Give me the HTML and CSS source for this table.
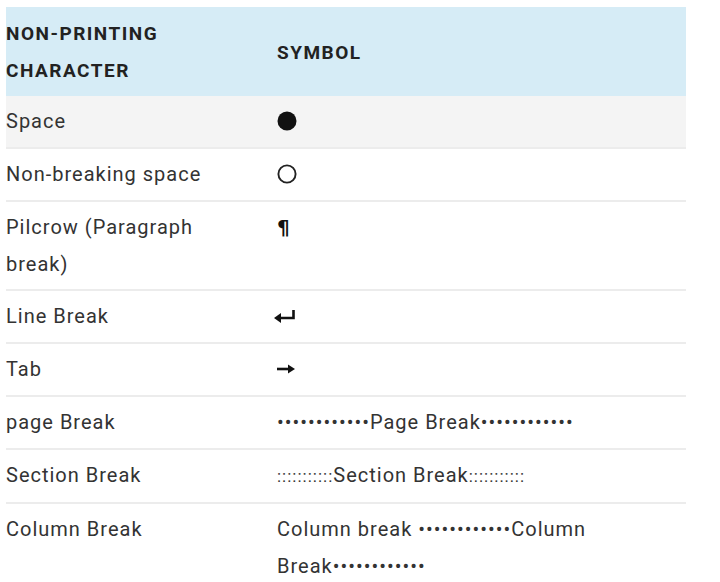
FILE: index.html
```html
<!DOCTYPE html>
<html>
<head>
<meta charset="utf-8">
<link rel="stylesheet" href="styles.css">
</head>
<body>
<div class="page">
  <table class="chars">
    <thead>
      <tr><th class="c1">NON-PRINTING CHARACTER</th><th>SYMBOL</th></tr>
    </thead>
    <tbody>
      <tr class="shade"><td class="c1">Space</td><td><svg class="ico" width="20" height="20" viewBox="0 0 20 20"><circle cx="10" cy="10" r="9.5" fill="#111"/></svg></td></tr>
      <tr><td class="c1">Non-breaking space</td><td><svg class="ico" width="20" height="20" viewBox="0 0 20 20"><circle cx="10" cy="10" r="8.6" fill="none" stroke="#222" stroke-width="1.9"/></svg></td></tr>
      <tr class="tight"><td class="c1">Pilcrow (Paragraph break)</td><td><span class="pilcrow">¶</span></td></tr>
      <tr><td class="c1">Line Break</td><td><svg class="ico lb" width="24" height="14" viewBox="0 0 24 14"><path d="M20.5 1 V9 H6" fill="none" stroke="#111" stroke-width="2.6"/><path d="M1 9 L8 4 L8 14 Z" fill="#111"/></svg></td></tr>
      <tr><td class="c1">Tab</td><td><svg class="ico" width="18" height="10" viewBox="0 0 18 10"><path d="M0 5 H12" stroke="#111" stroke-width="2.6"/><path d="M18 5 L11 0.5 L11 9.5 Z" fill="#111"/></svg></td></tr>
      <tr><td class="c1">page Break</td><td>••••••••••••Page Break••••••••••••</td></tr>
      <tr><td class="c1">Section Break</td><td><span class="colons">:::::::::::</span>Section Break<span class="colons">:::::::::::</span></td></tr>
      <tr><td class="c1">Column Break</td><td>Column break ••••••••••••Column Break••••••••••••</td></tr>
    </tbody>
  </table>
</div>
</body>
</html>
```
FILE: styles.css
```css
html, body {
  margin: 0;
  padding: 0;
  background: #ffffff;
}
.page {
  padding: 7px 0 0 6px;
  width: 680px;
}
.chars {
  width: 680px;
  border-collapse: collapse;
  font-family: Roboto, "Liberation Sans", sans-serif;
  font-size: 20px;
  letter-spacing: 1px;
  line-height: 37px;
  color: #333;
}
.chars th {
  text-align: left;
  font-weight: 700;
  color: #222;
  background: #d6ecf6;
  padding: 8px 0 7px;
  letter-spacing: 1.5px;
  font-size: 19px;
}
.chars td {
  padding: 7px 0;
  border-bottom: 2px solid #ececec;
  vertical-align: top;
}
.chars tr.tight td {
  padding-bottom: 6px;
}
.chars .c1 {
  width: 271px;
  padding-right: 60px;
  box-sizing: border-box;
}
.chars tr.shade td {
  background: #f4f4f4;
}
.ico {
  display: inline-block;
  vertical-align: middle;
  position: relative;
  top: -2px;
}
.lb {
  margin-left: -4px;
}
.pilcrow {
  font-family: "DejaVu Sans", sans-serif;
  font-weight: 700;
  font-size: 20px;
  color: #111;
}
.colons {
  letter-spacing: 1px;
  font-size: 17px;
}
```
